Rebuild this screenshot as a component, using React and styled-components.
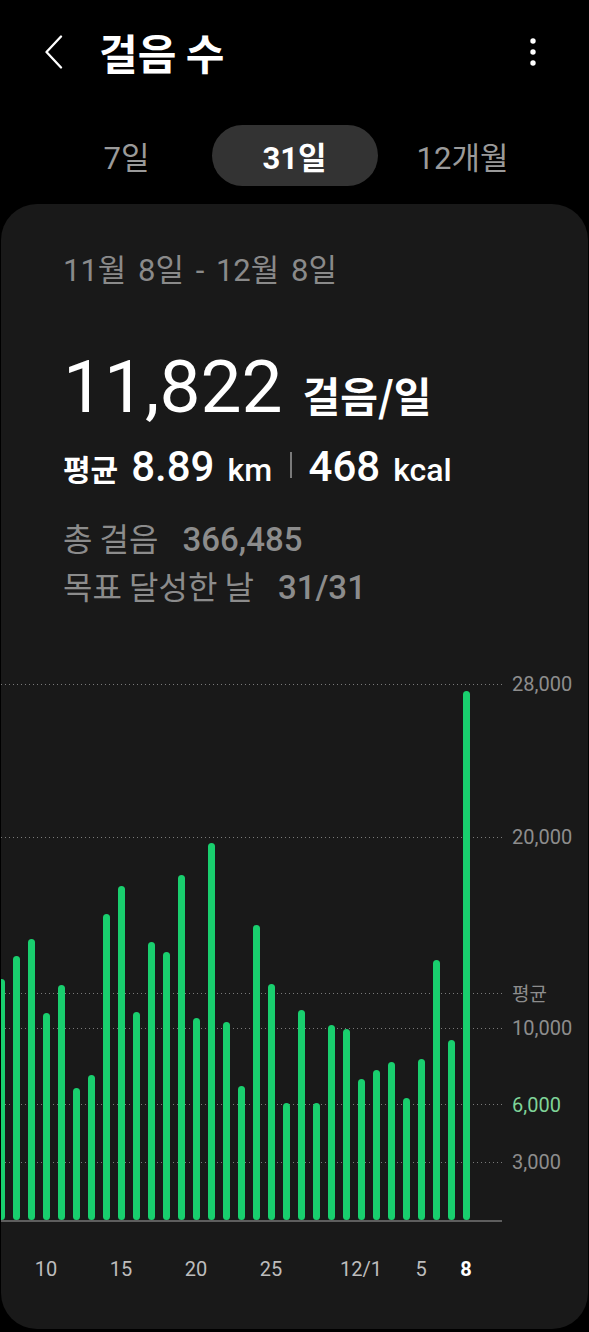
import React from 'react';
import styled, { createGlobalStyle } from 'styled-components';

const GlobalStyle = createGlobalStyle`
  html, body { margin: 0; padding: 0; background: #000; }
  body {
    font-family: Roboto, "Noto Sans CJK KR", sans-serif;
    color: #fff;
    -webkit-font-smoothing: antialiased;
  }
  * { box-sizing: border-box; }
`;

const SCALE = 19.125 / 1000;
const PLOT_H = 536;
const GREEN = '#19cf6e';

const DAYS = [
  12575, 13778, 14667, 10797, 12261, 6876, 7556, 15974, 17438, 10850, 14510,
  13987, 18013, 10536, 19686, 10327, 6980, 15399, 12314, 6092, 10954, 6092,
  10170, 9961, 7346, 7817, 8235, 6353, 8392, 13569, 9386, 27634,
];
const X_LABELS = { 3: '10', 8: '15', 13: '20', 18: '25', 24: '12/1', 28: '5', 31: '8' };
const CURRENT = 31;
const AVG = 11822;

const GRID = [
  { v: 28000, label: '28,000' },
  { v: 20000, label: '20,000' },
  { v: AVG, label: '평균', kind: 'avg' },
  { v: 10000, label: '10,000' },
  { v: 6000, label: '6,000', kind: 'goal' },
  { v: 3000, label: '3,000' },
];

const Screen = styled.div`
  width: 589px;
  height: 1332px;
  background: #000;
  overflow: hidden;
  display: flex;
  flex-direction: column;
`;

const Header = styled.header`
  height: 104px;
  flex: none;
  display: flex;
  align-items: center;
  padding: 0 52px 0 44px;
`;

const IconButton = styled.button`
  background: none;
  border: 0;
  padding: 0;
  margin: 0;
  display: flex;
  align-items: center;
  justify-content: center;
  color: #fff;
`;

const Title = styled.h1`
  margin: 0 0 0 35px;
  font-family: "Noto Sans CJK KR", sans-serif;
  font-size: 42px;
  font-weight: 700;
  line-height: 1;
  color: #fff;
`;

const Spacer = styled.div`
  flex: 1;
`;

const TabBar = styled.nav`
  flex: none;
  margin-top: 21px;
  display: grid;
  grid-template-columns: repeat(3, 166px);
  column-gap: 2px;
  justify-content: center;
`;

const Tab = styled.div`
  height: 61px;
  border-radius: 31px;
  display: flex;
  align-items: center;
  justify-content: center;
  font-size: 31px;
  font-weight: ${(p) => (p.$active ? 700 : 400)};
  color: ${(p) => (p.$active ? '#fff' : '#9a9a9a')};
  background: ${(p) => (p.$active ? '#333333' : 'transparent')};
`;

const Card = styled.section`
  flex: none;
  margin: 18px 1px 0;
  background: #191919;
  border-radius: 36px;
  overflow: hidden;
  padding: 50px 0 45px;
`;

const Summary = styled.div`
  padding-left: 62px;
`;

const DateRange = styled.div`
  height: 34px;
  line-height: 34px;
  font-size: 31px;
  color: #8a8a8a;
  word-spacing: 4px;
  white-space: nowrap;
`;

const BigRow = styled.div`
  margin-top: 59px;
  height: 80px;
  line-height: 80px;
  font-size: 73px;
  font-weight: 400;
  color: #fff;
  white-space: nowrap;
`;

const BigUnit = styled.span`
  margin-left: 20px;
  font-family: "Noto Sans CJK KR", sans-serif;
  font-size: 41px;
  font-weight: 700;
  line-height: 1;
`;

const StatsRow = styled.div`
  margin-top: 16px;
  height: 48px;
  line-height: 48px;
  font-size: 42px;
  font-weight: 500;
  color: #fff;
  white-space: nowrap;
`;

const StatLabel = styled.span`
  font-family: "Noto Sans CJK KR", sans-serif;
  font-size: 30px;
  font-weight: 700;
  line-height: 1;
  margin-right: 13px;
`;

const StatUnit = styled.span`
  font-size: 32px;
  font-weight: 500;
  line-height: 1;
  margin-left: 13px;
`;

const Divider = styled.span`
  display: inline-block;
  width: 1.5px;
  height: 26px;
  margin: 0 17px 3px 18px;
  background: #7a7a7a;
`;

const Totals = styled.div`
  margin-top: 25px;
`;

const TotalLine = styled.div`
  height: 48px;
  line-height: 48px;
  font-size: 32px;
  color: #8c8c8c;
  white-space: nowrap;
`;

const TotalLabel = styled.span`
  font-family: "Noto Sans CJK KR", sans-serif;
  font-weight: 400;
  line-height: 1;
`;

const TotalValue = styled.span`
  margin-left: 24px;
  font-size: 33px;
  font-weight: 500;
`;

const Chart = styled.div`
  position: relative;
  margin-top: 71.5px;
`;

const Plot = styled.div`
  position: relative;
  width: 501px;
  height: ${PLOT_H}px;
`;

const GridLine = styled.div`
  position: absolute;
  left: 0;
  right: 0;
  height: 1px;
  background-image: linear-gradient(to right, #7a7a7a 0 1.4px, transparent 1.4px);
  background-size: 4px 1px;
`;

const BarRow = styled.div`
  position: relative;
  z-index: 1;
  height: 100%;
  margin-left: -7.5px;
  display: flex;
  align-items: flex-end;
`;

const BarSlot = styled.div`
  flex: 0 0 15px;
  min-width: 0;
  display: flex;
  justify-content: center;
  align-items: flex-end;
  height: 100%;
`;

const Bar = styled.div`
  width: 7px;
  border-radius: 3.5px;
  background: ${GREEN};
`;

const Baseline = styled.div`
  width: 501px;
  height: 2px;
  background: #5e5e5e;
`;

const YLabel = styled.div`
  position: absolute;
  left: 511px;
  transform: translateY(-50%);
  font-size: ${(p) => (p.$kind === 'avg' ? 19 : 20)}px;
  font-family: ${(p) => (p.$kind === 'avg' ? '"Noto Sans CJK KR", sans-serif' : 'Roboto, sans-serif')};
  line-height: 24px;
  white-space: nowrap;
  color: ${(p) => (p.$kind === 'goal' ? '#7fd398' : '#8d8d8d')};
`;

const XAxis = styled.div`
  margin-top: 32.5px;
  margin-left: -7.5px;
  height: 30px;
  display: flex;
`;

const XSlot = styled.div`
  flex: 0 0 15px;
  width: 15px;
  min-width: 0;
  display: flex;
  justify-content: center;
  white-space: nowrap;
  line-height: 30px;
  font-size: 20px;
  font-weight: ${(p) => (p.$current ? 700 : 400)};
  color: ${(p) => (p.$current ? '#fff' : '#bdbdbd')};
`;

const XText = styled.span`
  flex: none;
`;

const ChevronLeft = () => (
  <svg width="20" height="34" viewBox="0 0 20 34" fill="none">
    <polyline points="17,1.5 2.5,17 17,32.5" stroke="#fff" strokeWidth="2.3" strokeLinecap="round" strokeLinejoin="round" />
  </svg>
);

const Kebab = () => (
  <svg width="8" height="30" viewBox="0 0 8 30">
    <circle cx="4" cy="4" r="2.7" fill="#fff" />
    <circle cx="4" cy="15" r="2.7" fill="#fff" />
    <circle cx="4" cy="26" r="2.7" fill="#fff" />
  </svg>
);

const posTop = (v) => PLOT_H - v * SCALE;

export default function App() {
  return (
    <>
      <GlobalStyle />
      <Screen>
        <Header>
          <IconButton aria-label="back"><ChevronLeft /></IconButton>
          <Title>걸음 수</Title>
          <Spacer />
          <IconButton aria-label="more"><Kebab /></IconButton>
        </Header>

        <TabBar>
          <Tab>7일</Tab>
          <Tab $active>31일</Tab>
          <Tab>12개월</Tab>
        </TabBar>

        <Card>
          <Summary>
            <DateRange>11월 8일 - 12월 8일</DateRange>
            <BigRow>
              11,822<BigUnit>걸음/일</BigUnit>
            </BigRow>
            <StatsRow>
              <StatLabel>평균</StatLabel>8.89<StatUnit>km</StatUnit>
              <Divider />
              468<StatUnit>kcal</StatUnit>
            </StatsRow>
            <Totals>
              <TotalLine>
                <TotalLabel>총 걸음</TotalLabel>
                <TotalValue>366,485</TotalValue>
              </TotalLine>
              <TotalLine>
                <TotalLabel>목표 달성한 날</TotalLabel>
                <TotalValue>31/31</TotalValue>
              </TotalLine>
            </Totals>
          </Summary>

          <Chart>
            <Plot>
              {GRID.map((g) => (
                <GridLine key={g.label} style={{ top: posTop(g.v) - 0.5 }} />
              ))}
              <BarRow>
                {DAYS.map((v, i) => (
                  <BarSlot key={i}>
                    <Bar style={{ height: v * SCALE }} />
                  </BarSlot>
                ))}
              </BarRow>
            </Plot>
            <Baseline />
            {GRID.map((g) => (
              <YLabel key={g.label} $kind={g.kind} style={{ top: posTop(g.v) }}>
                {g.label}
              </YLabel>
            ))}
          </Chart>

          <XAxis>
            {DAYS.map((_, i) => (
              <XSlot key={i} $current={i === CURRENT}>
                {X_LABELS[i] ? <XText>{X_LABELS[i]}</XText> : null}
              </XSlot>
            ))}
          </XAxis>
        </Card>
      </Screen>
    </>
  );
}
